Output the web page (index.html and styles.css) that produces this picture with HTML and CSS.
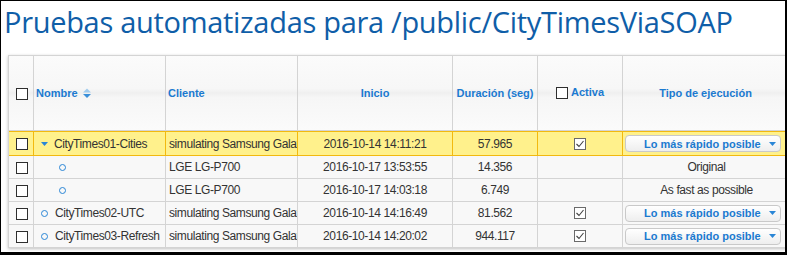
FILE: index.html
```html
<!DOCTYPE html>
<html lang="es">
<head>
    <meta charset="UTF-8">
    <meta name="viewport" content="width=device-width, initial-scale=1.0">
    <title>Pruebas automatizadas</title>
    <link rel="stylesheet" href="styles.css">
</head>
<body>
    <div class="frame">
        <h1 class="title">Pruebas automatizadas para /public/CityTimesViaSOAP</h1>
        <table class="tests">
            <thead>
                <tr>
                    <th class="col-sel"><span class="box"></span></th>
                    <th class="col-name">Nombre
                        <svg class="sort" width="8" height="11" viewBox="0 0 8 11">
                            <polygon points="0,4.5 4,0.5 8,4.5" fill="#9fcbee"/>
                            <polygon points="0,6 8,6 4,10" fill="#3a8fd9"/>
                        </svg>
                    </th>
                    <th class="col-client">Cliente</th>
                    <th class="col-start">Inicio</th>
                    <th class="col-dur">Duración (seg)</th>
                    <th class="col-active"><span class="box"></span>Activa</th>
                    <th class="col-mode">Tipo de ejecución</th>
                </tr>
            </thead>
            <tbody>
                <tr class="selected">
                    <td class="col-sel"><span class="box"></span></td>
                    <td class="col-name">
                        <svg class="expander" width="7" height="4" viewBox="0 0 7 4"><polygon points="0,0 7,0 3.5,4" fill="#2a86d6"/></svg>CityTimes01-Cities
                    </td>
                    <td class="col-client">simulating Samsung Galaxy S6</td>
                    <td class="col-start">2016-10-14 14:11:21</td>
                    <td class="col-dur">57.965</td>
                    <td class="col-active"><svg class="check" width="12" height="12" viewBox="0 0 12 12"><rect x="0.5" y="0.5" width="11" height="11" fill="#fff" stroke="#6a6a6a"/><polyline points="2.5,6 5,8.5 9.5,3" fill="none" stroke="#404040" stroke-width="1.1"/></svg></td>
                    <td class="col-mode">
                        <div class="mode-select"><span>Lo más rápido posible</span><svg width="7" height="4" viewBox="0 0 7 4"><polygon points="0,0 7,0 3.5,4" fill="#2a86d6"/></svg></div>
                    </td>
                </tr>
                <tr>
                    <td class="col-sel"><span class="box"></span></td>
                    <td class="col-name child"><span class="ring"></span></td>
                    <td class="col-client">LGE LG-P700</td>
                    <td class="col-start">2016-10-17 13:53:55</td>
                    <td class="col-dur">14.356</td>
                    <td class="col-active"></td>
                    <td class="col-mode">Original</td>
                </tr>
                <tr>
                    <td class="col-sel"><span class="box"></span></td>
                    <td class="col-name child"><span class="ring"></span></td>
                    <td class="col-client">LGE LG-P700</td>
                    <td class="col-start">2016-10-17 14:03:18</td>
                    <td class="col-dur">6.749</td>
                    <td class="col-active"></td>
                    <td class="col-mode">As fast as possible</td>
                </tr>
                <tr>
                    <td class="col-sel"><span class="box"></span></td>
                    <td class="col-name"><span class="ring"></span>CityTimes02-UTC</td>
                    <td class="col-client">simulating Samsung Galaxy S6</td>
                    <td class="col-start">2016-10-14 14:16:49</td>
                    <td class="col-dur">81.562</td>
                    <td class="col-active"><svg class="check" width="12" height="12" viewBox="0 0 12 12"><rect x="0.5" y="0.5" width="11" height="11" fill="#fff" stroke="#6a6a6a"/><polyline points="2.5,6 5,8.5 9.5,3" fill="none" stroke="#404040" stroke-width="1.1"/></svg></td>
                    <td class="col-mode">
                        <div class="mode-select"><span>Lo más rápido posible</span><svg width="7" height="4" viewBox="0 0 7 4"><polygon points="0,0 7,0 3.5,4" fill="#2a86d6"/></svg></div>
                    </td>
                </tr>
                <tr>
                    <td class="col-sel"><span class="box"></span></td>
                    <td class="col-name"><span class="ring"></span>CityTimes03-Refresh</td>
                    <td class="col-client">simulating Samsung Galaxy S6</td>
                    <td class="col-start">2016-10-14 14:20:02</td>
                    <td class="col-dur">944.117</td>
                    <td class="col-active"><svg class="check" width="12" height="12" viewBox="0 0 12 12"><rect x="0.5" y="0.5" width="11" height="11" fill="#fff" stroke="#6a6a6a"/><polyline points="2.5,6 5,8.5 9.5,3" fill="none" stroke="#404040" stroke-width="1.1"/></svg></td>
                    <td class="col-mode">
                        <div class="mode-select"><span>Lo más rápido posible</span><svg width="7" height="4" viewBox="0 0 7 4"><polygon points="0,0 7,0 3.5,4" fill="#2a86d6"/></svg></div>
                    </td>
                </tr>
            </tbody>
        </table>
    </div>
</body>
</html>
```

FILE: styles.css
```css
body {
    margin: 0;
    font-family: "Liberation Sans", Arial, sans-serif;
    background-color: #ffffff;
}
.frame {
    box-sizing: border-box;
    width: 787px;
    height: 255px;
    border: solid #000000;
    border-width: 1px 2px 3px 1px;
    overflow: hidden;
    background-color: #ffffff;
}
.title {
    margin: 0 0 15px;
    padding: 3px 0 0 3px;
    font-family: "Open Sans", sans-serif;
    font-weight: normal;
    font-size: 29px;
    line-height: 36px;
    letter-spacing: -0.3px;
    color: #0f5ea8;
    white-space: nowrap;
}
.tests {
    margin-left: 7px;
    width: 780px;
    table-layout: fixed;
    border-collapse: separate;
    border-spacing: 0;
    border-top: 1px solid #d4d4d4;
    border-left: 1px solid #d4d4d4;
    box-shadow: 0 1px 3px rgba(0, 0, 0, 0.25);
    font-size: 12px;
    letter-spacing: -0.4px;
    color: #333333;
}
.tests th,
.tests td {
    box-sizing: border-box;
    padding: 0 3px;
    border-right: 1px solid #d4d4d4;
    border-bottom: 1px solid #d4d4d4;
    white-space: nowrap;
    overflow: hidden;
    vertical-align: middle;
}
.tests th {
    height: 75px;
    background: linear-gradient(#fbfbfb, #f7f7f7 44%, #efefef 50%, #f6f6f6 56%, #fbfbfb);
    font-size: 11px;
    font-weight: bold;
    letter-spacing: 0;
    color: #1b7ad0;
    text-align: center;
}
.tests td {
    height: 23px;
    background-color: #f8f8f8;
}
.tests .selected td {
    height: 25px;
    background-color: #fff18c;
    border-top: 1px solid #f2b90f;
    border-bottom-color: #f2b90f;
    border-right-color: #f2b90f;
}
.col-sel { width: 25px; text-align: center; }
.col-name { width: 132px; }
.col-client { width: 132px; }
.col-start { width: 155px; text-align: center; }
.col-dur { width: 85px; text-align: center; }
.col-active { width: 85px; text-align: center; }
.col-mode { width: 166px; text-align: center; }
.tests th.col-name,
.tests th.col-client {
    text-align: left;
    padding-left: 2px;
}
.tests td.col-sel,
.tests th.col-sel {
    padding: 0 0 0 2px;
}
.tests td.col-name {
    padding-left: 7px;
}
.tests td.col-name.child {
    padding-left: 25px;
}
.tests td.col-mode {
    padding: 0 0 0 2px;
}
.box {
    display: inline-block;
    box-sizing: border-box;
    width: 12px;
    height: 12px;
    border: 1px solid #2e2e2e;
    background-color: #ffffff;
    vertical-align: middle;
}
th.col-active .box {
    margin-right: 3px;
    position: relative;
    top: -1px;
}
.sort {
    margin-left: 2px;
    vertical-align: middle;
}
.expander {
    margin-right: 6px;
    vertical-align: middle;
}
.ring {
    display: inline-block;
    box-sizing: border-box;
    width: 7px;
    height: 7px;
    margin-right: 7px;
    border: 1.5px solid #2a86d6;
    border-radius: 50%;
    vertical-align: middle;
}
.check {
    display: block;
    margin: 0 auto;
}
.mode-select {
    display: flex;
    align-items: center;
    box-sizing: border-box;
    width: 156px;
    height: 17px;
    padding-left: 18px;
    border: 1px solid #c9c9c9;
    border-radius: 4px;
    background: linear-gradient(#ffffff, #eeeeee);
    font-size: 11px;
    font-weight: bold;
    letter-spacing: 0;
    color: #1b7ad0;
}
.mode-select span {
    margin-right: 8px;
}
```
